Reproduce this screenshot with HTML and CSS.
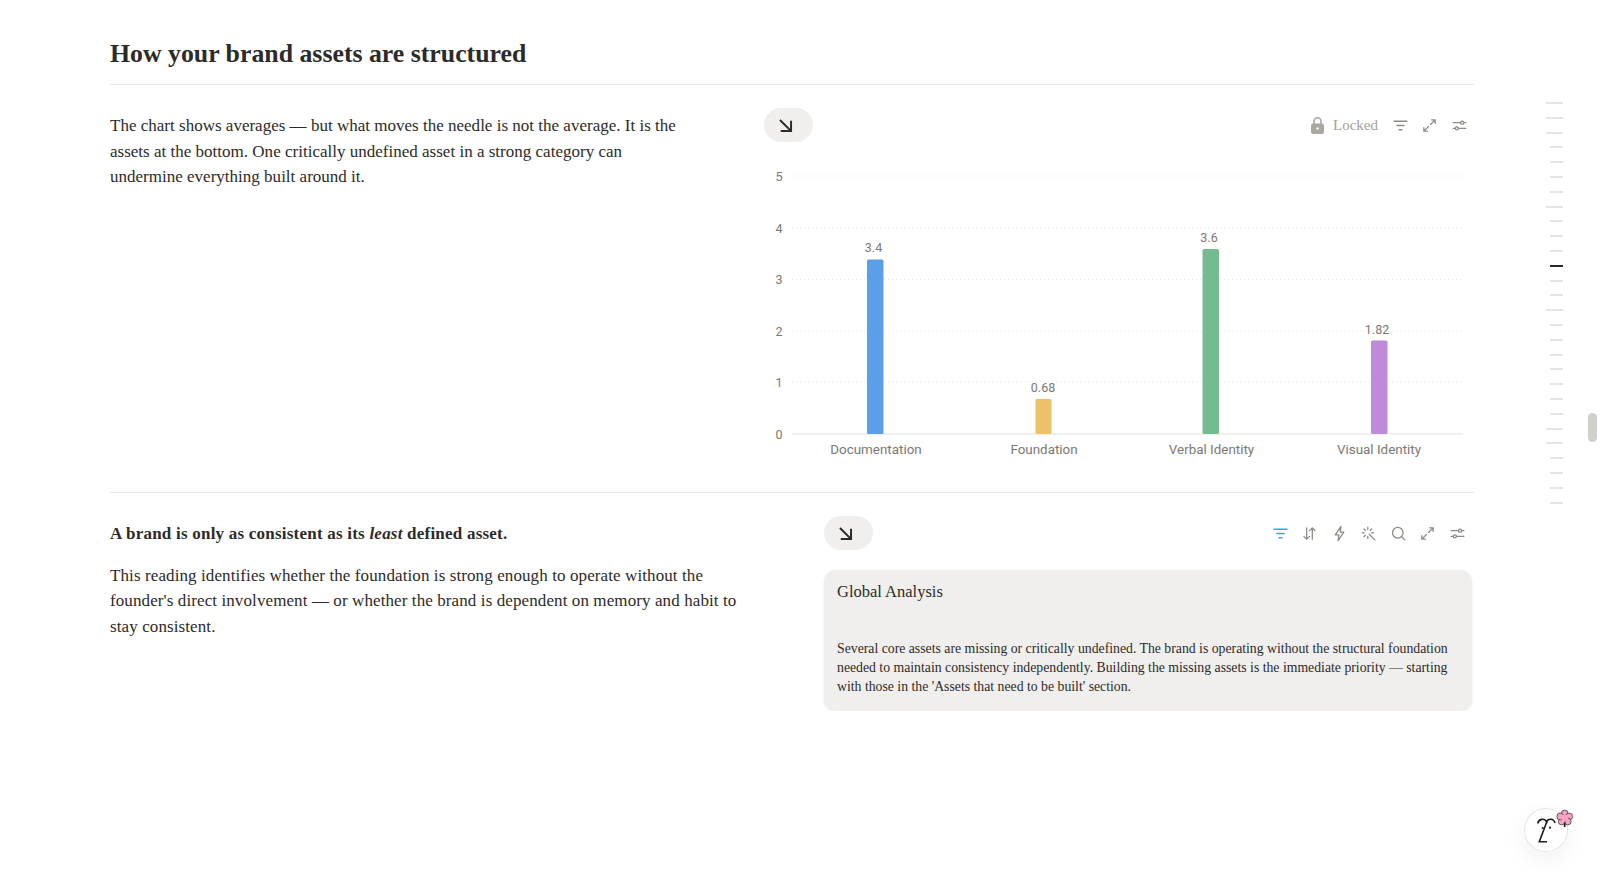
FILE: index.html
```html
<!DOCTYPE html>
<html lang="en">
<head>
    <meta charset="UTF-8">
    <title>How your brand assets are structured</title>
    <link rel="stylesheet" href="styles.css">
</head>
<body>
    <svg class="sprite" aria-hidden="true">
        <symbol id="i-arrow" viewBox="0 0 24 24"><path d="M5 5l13.500 13.500M19 6v13H6"/></symbol>
        <symbol id="i-filter" viewBox="0 0 24 24"><path d="M3 6h18M7 12h10M10 18h4"/></symbol>
        <symbol id="i-expand" viewBox="0 0 24 24"><path d="M15 4h5v5M20 4l-6.500 6.500M4 20l6.500-6.500M9 20H4v-5"/></symbol>
        <symbol id="i-sliders" viewBox="0 0 24 24"><path d="M3 8h10.500M18 8h3M3 16h3M10.500 16h10.500"/><circle cx="15.700" cy="8" r="2.200"/><circle cx="8.300" cy="16" r="2.200"/></symbol>
    </svg>

    <main class="page">
        <h1 class="title">How your brand assets are structured</h1>

        <section class="row row-chart">
            <div class="copy copy-chart">
                <p>The chart shows averages — but what moves the needle is not the average. It is the assets at the bottom. One critically undefined asset in a strong category can undermine everything built around it.</p>
            </div>
            <div class="panel panel-chart">
                <div class="toolbar">
                    <button class="pill"><svg class="icon icon-arrow"><use href="#i-arrow"/></svg></button>
                    <div class="tools tools-chart">
                        <span class="locked">
                            <svg class="lock" viewBox="0 0 13 17"><path class="lock-loop" d="M3 7.500V4.300a3.500 3.500 0 0 1 7 0v3.200"/><rect y="6.500" width="13" height="10.500" rx="2.200"/><circle class="lock-hole" cx="6.500" cy="11.500" r="1.300"/></svg>
                            Locked
                        </span>
                        <svg class="icon"><use href="#i-filter"/></svg>
                        <svg class="icon"><use href="#i-expand"/></svg>
                        <svg class="icon"><use href="#i-sliders"/></svg>
                    </div>
                </div>
                <svg class="chart" viewBox="0 0 711 310">
                    <g class="grid">
                        <line x1="28" x2="699" y1="16" y2="16"/>
                        <line x1="28" x2="699" y1="68" y2="68"/>
                        <line x1="28" x2="699" y1="119.500" y2="119.500"/>
                        <line x1="28" x2="699" y1="171" y2="171"/>
                        <line x1="28" x2="699" y1="222" y2="222"/>
                    </g>
                    <line class="axis" x1="28" x2="699" y1="274" y2="274"/>
                    <g class="ticks">
                        <text x="15" y="16">5</text>
                        <text x="15" y="68">4</text>
                        <text x="15" y="119.500">3</text>
                        <text x="15" y="171">2</text>
                        <text x="15" y="222">1</text>
                        <text x="15" y="274">0</text>
                    </g>
                    <rect class="bar" x="103" y="99.500" width="16.500" height="174.500" rx="1.500" fill="#5b9fe8"/>
                    <rect class="bar" x="271.500" y="239" width="16" height="35" rx="1.500" fill="#ebc16a"/>
                    <rect class="bar" x="438.500" y="89" width="16.500" height="185" rx="1.500" fill="#74bc90"/>
                    <rect class="bar" x="607" y="180.500" width="16.500" height="93.500" rx="1.500" fill="#be8ad9"/>
                    <g class="values">
                        <text x="109.500" y="92">3.4</text>
                        <text x="279" y="232">0.68</text>
                        <text x="445" y="82">3.6</text>
                        <text x="613" y="174">1.82</text>
                    </g>
                    <g class="labels">
                        <text x="112" y="289">Documentation</text>
                        <text x="280" y="289">Foundation</text>
                        <text x="447.500" y="289">Verbal Identity</text>
                        <text x="615" y="289">Visual Identity</text>
                    </g>
                </svg>
            </div>
        </section>

        <section class="row row-analysis">
            <div class="copy copy-analysis">
                <p class="lead">A brand is only as consistent as its <em>least</em> defined asset.</p>
                <p>This reading identifies whether the foundation is strong enough to operate without the founder's direct involvement — or whether the brand is dependent on memory and habit to stay consistent.</p>
            </div>
            <div class="panel panel-analysis">
                <div class="toolbar">
                    <button class="pill"><svg class="icon icon-arrow"><use href="#i-arrow"/></svg></button>
                    <div class="tools tools-analysis">
                        <svg class="icon icon-active"><use href="#i-filter"/></svg>
                        <svg class="icon" viewBox="0 0 24 24"><path d="M8 4v16M4 16l4 4 4-4M16 20V4M12 8l4-4 4 4"/></svg>
                        <svg class="icon" viewBox="0 0 24 24"><path d="M14 2L6 14h5l-1 8 8-12h-5z"/></svg>
                        <svg class="icon" viewBox="0 0 24 24"><path d="M13 13l8 8M11 3v3M11 16v3M3 11h3M16 11h3M5.500 5.500l2 2M16.500 5.500l-2 2M5.500 16.500l2-2"/></svg>
                        <svg class="icon" viewBox="0 0 24 24"><circle cx="11" cy="11" r="7.500"/><path d="M16.500 16.500L21 21"/></svg>
                        <svg class="icon"><use href="#i-expand"/></svg>
                        <svg class="icon"><use href="#i-sliders"/></svg>
                    </div>
                </div>
                <div class="card">
                    <h2 class="card-title">Global Analysis</h2>
                    <p class="card-text">Several core assets are missing or critically undefined. The brand is operating without the structural foundation needed to maintain consistency independently. Building the missing assets is the immediate priority — starting with those in the 'Assets that need to be built' section.</p>
                </div>
            </div>
        </section>
    </main>

    <!-- section index on the right edge -->
    <nav class="rail">
        <i class="long"></i><i class="long"></i><i class="long"></i><i></i><i></i><i></i><i></i>
        <i class="long"></i><i></i><i></i><i></i><i class="now"></i><i></i><i></i>
        <i class="long"></i><i></i><i></i><i></i><i></i><i></i><i></i><i></i>
        <i class="long"></i><i class="long"></i><i></i><i></i><i></i><i></i>
    </nav>
    <div class="scroll-thumb"></div>

    <div class="avatar">
        <svg class="face" viewBox="0 0 60 45">
            <path d="M13.700 15.500C14.500 11 20.500 9.500 22.700 14C23.700 10.500 29.500 10 31 15"/>
            <path d="M22.700 14L15.300 33.700H23"/>
            <circle class="dot" cx="18.700" cy="20" r="1.100"/>
            <circle class="dot" cx="26" cy="19.700" r="1.100"/>
            <g class="flower">
                <circle cx="40.700" cy="5.500" r="3.400"/>
                <circle cx="45.200" cy="8.500" r="3.400"/>
                <circle cx="43.700" cy="13.500" r="3.400"/>
                <circle cx="37.700" cy="13.500" r="3.400"/>
                <circle cx="36.200" cy="8.500" r="3.400"/>
                <circle class="flower-mid" cx="40.700" cy="10" r="3.400"/>
            </g>
            <path d="M40.700 14.500V19"/>
        </svg>
    </div>
</body>
</html>
```

FILE: styles.css
```css
body {
    margin: 0;
    background-color: #fff;
    color: #2c2b29;
    font-family: 'Liberation Serif', serif;
}
p, h1, h2 {
    margin: 0;
}
.sprite {
    display: none;
}
.page {
    width: 1364px;
    margin-left: 110px;
    padding-top: 39px;
}
.title {
    font-size: 25.800px;
    line-height: 30px;
    font-weight: 700;
    padding-bottom: 15px;
    border-bottom: 1px solid #e8e7e5;
}
.row {
    display: flex;
    border-bottom: 1px solid #e8e7e5;
}
.row-chart {
    height: 408px;
    padding-top: 23px;
    box-sizing: border-box;
}
.row-analysis {
    border-bottom: 0;
    padding-top: 23px;
}
.copy {
    font-size: 17px;
    line-height: 25.500px;
}
.copy-chart {
    width: 575px;
    margin-top: 5px;
    margin-right: 79px;
    letter-spacing: 0.010px;
}
.copy-analysis {
    width: 630px;
    margin-top: 5px;
    margin-right: 84px;
    letter-spacing: 0.100px;
}
.lead {
    margin-bottom: 16px;
    font-weight: 700;
    letter-spacing: 0.220px;
}
.panel-chart {
    width: 710px;
}
.panel-analysis {
    width: 648px;
}
.toolbar {
    display: flex;
    justify-content: space-between;
    align-items: center;
}
.pill {
    display: flex;
    justify-content: center;
    align-items: center;
    width: 49px;
    height: 34px;
    padding: 0 6px 0 0;
    border: 0;
    border-radius: 17px;
    background-color: #f0efed;
}
.tools {
    display: flex;
    align-items: center;
    gap: 12.500px;
}
.tools-chart {
    padding-right: 6.500px;
}
.tools-analysis {
    padding-right: 6.500px;
}
.icon {
    width: 17px;
    height: 17px;
    fill: none;
    stroke: #8f8b85;
    stroke-width: 1.800;
    stroke-linecap: round;
    stroke-linejoin: round;
}
.icon-arrow {
    width: 19px;
    height: 19px;
    stroke: #2a2a28;
    stroke-width: 2.500;
    stroke-linecap: butt;
    stroke-linejoin: miter;
}
.icon-active {
    stroke: #4f9be8;
    stroke-width: 2.400;
}
.locked {
    display: flex;
    align-items: center;
    gap: 9.500px;
    margin-right: 1px;
    font-size: 15px;
    color: #a5a19b;
}
.lock {
    width: 13px;
    height: 17px;
    fill: #aaa6a0;
}
.lock-loop {
    fill: none;
    stroke: #aaa6a0;
    stroke-width: 1.600;
}
.lock-hole {
    fill: #fff;
}
.chart {
    display: block;
    width: 711px;
    height: 310px;
    margin-top: 18px;
    font-family: 'Roboto', sans-serif;
    font-size: 12.500px;
    fill: #7c7873;
}
.grid line {
    stroke: #e6e5e2;
    stroke-width: 1;
    stroke-dasharray: 1 3;
}
.axis {
    stroke: #ecebe9;
    stroke-width: 1.500;
}
.ticks text {
    text-anchor: middle;
    dominant-baseline: central;
}
.values text,
.labels text {
    text-anchor: middle;
}
.labels text {
    font-size: 13.400px;
    dominant-baseline: central;
}
.card {
    margin-top: 20px;
    padding: 10px 12px 15px 13px;
    border-radius: 12px;
    background-color: #f0efed;
    box-shadow: 0 1px 3px rgba(0, 0, 0, 0.08);
}
.card-title {
    font-size: 16.500px;
    line-height: 24px;
    font-weight: 400;
}
.card-text {
    margin-top: 34.500px;
    font-size: 13.750px;
    line-height: 19px;
}
.rail {
    position: fixed;
    top: 102px;
    right: 37px;
    display: flex;
    flex-direction: column;
    align-items: flex-end;
    gap: 12.800px;
}
.rail i {
    display: block;
    width: 13px;
    height: 2px;
    background-color: #e6e5e1;
}
.rail .long {
    width: 17px;
}
.rail .now {
    background-color: #2a2a28;
}
.scroll-thumb {
    position: fixed;
    top: 413px;
    right: 3px;
    width: 9px;
    height: 29px;
    border-radius: 4.500px;
    background-color: #d1d0cb;
}
.avatar {
    position: fixed;
    left: 1524px;
    top: 808px;
    width: 44px;
    height: 44px;
    border-radius: 50%;
    background-color: #fff;
    box-shadow: inset 0 0 0 1px #e6e5e3, 0 8px 24px rgba(0, 0, 0, 0.06);
}
.face {
    position: absolute;
    left: 0;
    top: 0;
    width: 60px;
    height: 45px;
    overflow: visible;
    fill: none;
    stroke: #1d1d1b;
    stroke-width: 1.600;
}
.face .dot {
    fill: #1d1d1b;
    stroke: none;
}
.flower circle {
    fill: #f0a6c4;
    stroke: #3a2a30;
    stroke-width: 0.700;
}
.face .flower-mid {
    stroke: none;
}
```
